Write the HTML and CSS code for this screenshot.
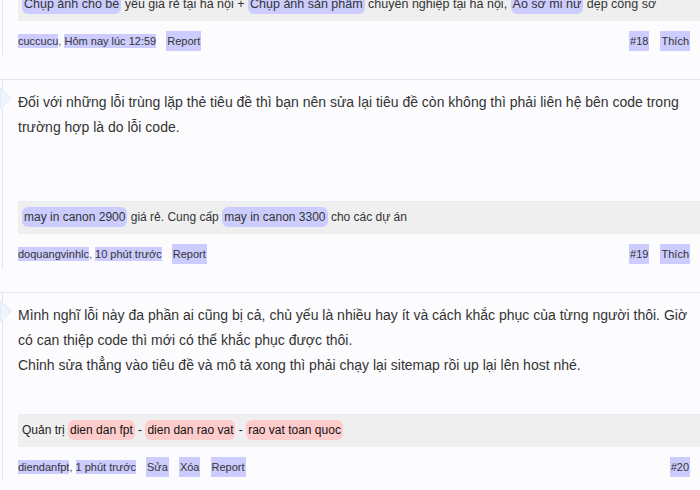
FILE: index.html
```html
<!DOCTYPE html>
<html lang="vi">
<head>
    <meta charset="UTF-8">
    <meta name="viewport" content="width=device-width, initial-scale=1.0">
    <title>Thảo luận</title>
    <link rel="stylesheet" href="styles.css">
</head>
<body>

    <ol class="messageList">
        <li class="message first">
            <div class="messageCell">
                <div class="signature sig-large">
                    <a class="hl" href="#">Chụp ảnh cho bé</a> yêu giá rẻ tại hà nội + <a class="hl" href="#">Chụp ảnh sản phẩm</a> chuyên nghiệp tại hà nội, <a class="hl" href="#">Áo sơ mi nữ</a> đẹp công sở
                </div>
                <div class="messageMeta">
                    <div class="metaLeft">
                        <span class="tag">cuccucu</span>, <span class="tag">Hôm nay lúc 12:59</span>
                        <a class="btn" href="#">Report</a>
                    </div>
                    <div class="metaRight">
                        <a class="btn" href="#">#18</a>
                        <a class="btn" href="#">Thích</a>
                    </div>
                </div>
            </div>
        </li>

        <li class="message">
            <div class="messageCell">
                <span class="arrow"></span>
                <div class="messageText">
                    Đối với những lỗi trùng lặp thẻ tiêu đề thì bạn nên sửa lại tiêu đề còn không thì phải liên hệ bên code trong trường hợp là do lỗi code.<br><br>
                </div>
                <div class="signature">
                    <a class="hl" href="#">may in canon 2900</a> giá rẻ. Cung cấp <a class="hl" href="#">may in canon 3300</a> cho các dự án
                </div>
                <div class="messageMeta">
                    <div class="metaLeft">
                        <span class="tag">doquangvinhlc</span>, <span class="tag">10 phút trước</span>
                        <a class="btn" href="#">Report</a>
                    </div>
                    <div class="metaRight">
                        <a class="btn" href="#">#19</a>
                        <a class="btn" href="#">Thích</a>
                    </div>
                </div>
            </div>
        </li>

        <li class="message">
            <div class="messageCell">
                <span class="arrow"></span>
                <div class="messageText">
                    Mình nghĩ lỗi này đa phần ai cũng bị cả, chủ yếu là nhiều hay ít và cách khắc phục của từng người thôi. Giờ có can thiệp code thì mới có thể khắc phục được thôi.<br>
                    Chỉnh sửa thẳng vào tiêu đề và mô tả xong thì phải chạy lại sitemap rồi up lại lên host nhé.
                </div>
                <div class="signature sig-admin">
                    Quản trị <a class="hl red" href="#">dien dan fpt</a> - <a class="hl red" href="#">dien dan rao vat</a> - <a class="hl red" href="#">rao vat toan quoc</a>
                </div>
                <div class="messageMeta">
                    <div class="metaLeft">
                        <span class="tag">diendanfpt</span>, <span class="tag">1 phút trước</span>
                        <a class="btn" href="#">Sửa</a>
                        <a class="btn" href="#">Xóa</a>
                        <a class="btn" href="#">Report</a>
                    </div>
                    <div class="metaRight">
                        <a class="btn" href="#">#20</a>
                    </div>
                </div>
            </div>
        </li>
    </ol>

</body>
</html>
```

FILE: styles.css
```css
body {
    margin: 0;
    background-color: #fcfcfe;
    font-family: "Liberation Sans", Arial, sans-serif;
    color: #333;
    overflow: hidden;
}

a {
    color: #333;
    text-decoration: none;
}

.messageList {
    list-style: none;
    margin: -22px 0 0;
    padding: 0;
}

.message {
    border-top: 1px solid #dfe7ef;
    padding: 0 0 24px 2px;
}

.message.first {
    border-top: none;
}

.messageCell {
    position: relative;
    border-left: 1px solid #d9e8f5;
    padding: 10px 0 4px 15px;
}

/* flechita a la izquierda */
.arrow {
    position: absolute;
    left: -3px;
    top: 7px;
    width: 0;
    height: 0;
    border-top: 11px solid transparent;
    border-bottom: 11px solid transparent;
    border-left: 12px solid #e2edf7;
}

.arrow::after {
    content: "";
    position: absolute;
    left: -11px;
    top: -9px;
    border-top: 9px solid transparent;
    border-bottom: 9px solid transparent;
    border-left: 9px solid #f0f5fb;
}

.messageText {
    font-size: 14px;
    line-height: 25px;
    margin-bottom: 36px;
}

.signature {
    background-color: #efefef;
    border-top: 1px solid #e6edf3;
    padding: 5px 4px 6px;
    font-size: 12px;
    line-height: 21px;
    white-space: nowrap;
    overflow: hidden;
}

.sig-large {
    font-size: 12.5px;
}

.sig-admin {
    color: #222;
}

.hl {
    background-color: #ccccff;
    padding: 3px 2px;
    border-radius: 6px;
}

.hl.red {
    background-color: #ffcccc;
    color: #111;
}

.messageMeta {
    display: flex;
    justify-content: space-between;
    align-items: center;
    margin-top: 10px;
    padding-right: 10px;
    font-size: 11px;
    line-height: 12px;
    color: #555;
}

.tag {
    background-color: #ccccff;
    color: #333;
    padding: 1px 0;
}

.btn {
    display: inline-block;
    background-color: #ccccff;
    padding: 4px 1px;
    margin-left: 7px;
}

.metaRight .btn {
    margin-left: 8px;
}
```
